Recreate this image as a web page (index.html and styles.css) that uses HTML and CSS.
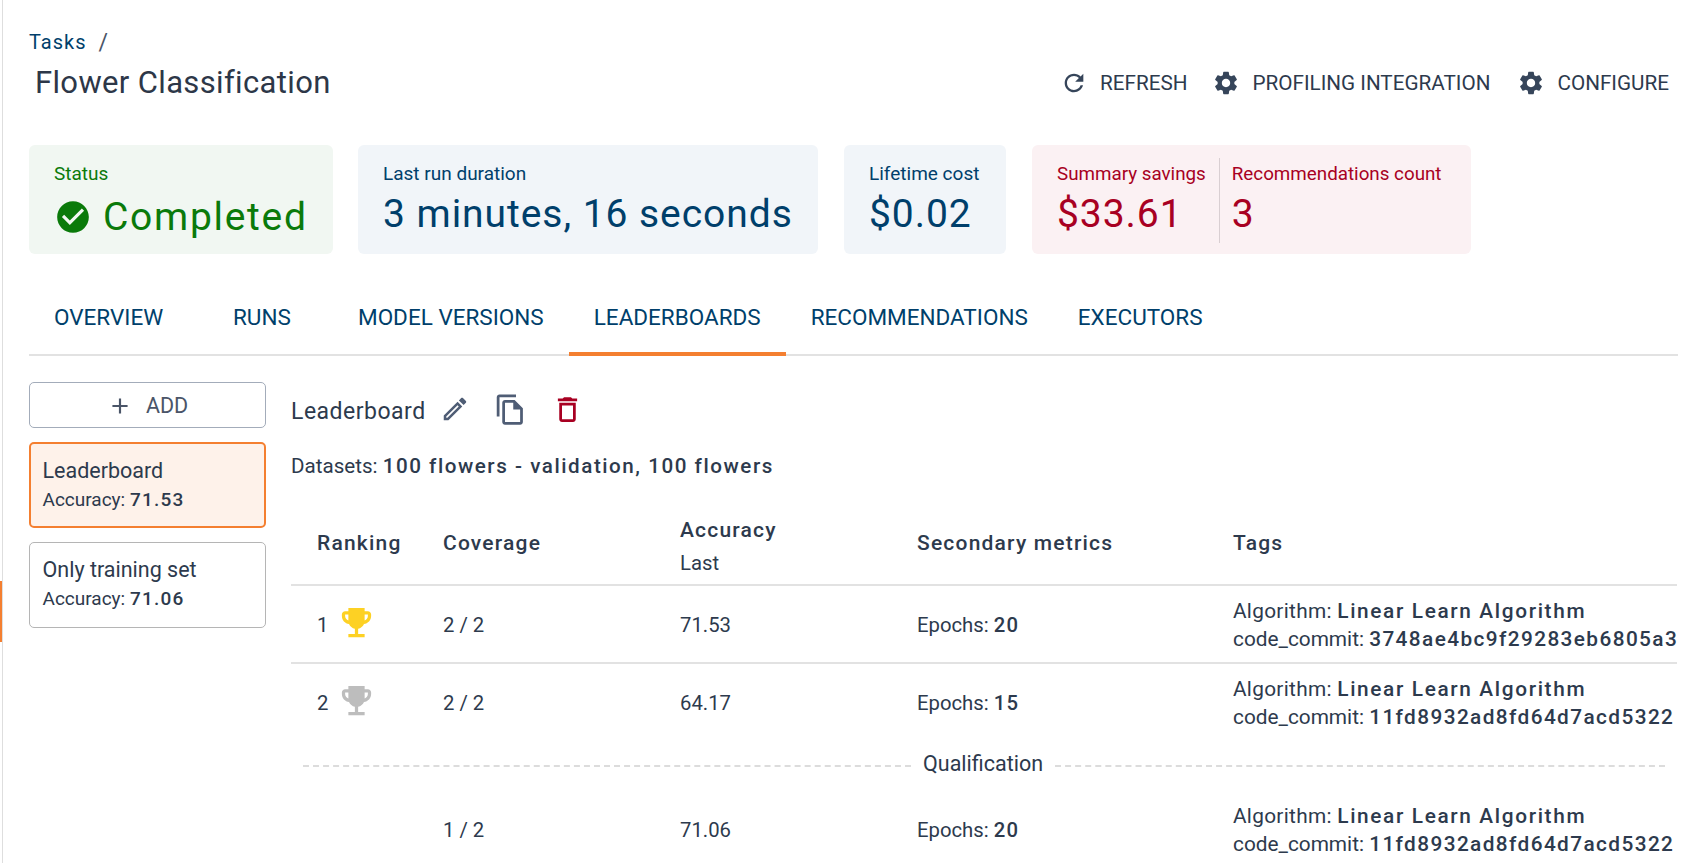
FILE: index.html
```html
<!DOCTYPE html>
<html lang="en">
<head>
    <meta charset="UTF-8">
    <title>Flower Classification - Tasks</title>
    <link rel="stylesheet" href="styles.css">
</head>
<body>
    <svg class="sprite" xmlns="http://www.w3.org/2000/svg">
        <symbol id="i-refresh" viewBox="0 0 24 24"><path d="M17.65 6.35C16.2 4.9 14.21 4 12 4c-4.42 0-7.99 3.58-7.99 8s3.57 8 7.99 8c3.73 0 6.84-2.55 7.73-6h-2.08c-.82 2.33-3.04 4-5.65 4-3.31 0-6-2.69-6-6s2.69-6 6-6c1.66 0 3.14.69 4.22 1.78L13 11h7V4l-2.35 2.35z"/></symbol>
        <symbol id="i-gear" viewBox="0 0 24 24"><path d="M19.14 12.94c.04-.3.06-.61.06-.94 0-.32-.02-.64-.07-.94l2.03-1.58c.18-.14.23-.41.12-.61l-1.92-3.32c-.12-.22-.37-.29-.59-.22l-2.39.96c-.5-.38-1.03-.7-1.62-.94l-.36-2.54c-.04-.24-.24-.41-.48-.41h-3.84c-.24 0-.43.17-.47.41l-.36 2.54c-.59.24-1.13.57-1.62.94l-2.39-.96c-.22-.08-.47 0-.59.22L2.74 8.87c-.12.21-.08.47.12.61l2.03 1.58c-.05.3-.09.63-.09.94s.02.64.07.94l-2.03 1.58c-.18.14-.23.41-.12.61l1.92 3.32c.12.22.37.29.59.22l2.39-.96c.5.38 1.03.7 1.62.94l.36 2.54c.05.24.24.41.48.41h3.84c.24 0 .44-.17.47-.41l.36-2.54c.59-.24 1.13-.56 1.62-.94l2.39.96c.22.08.47 0 .59-.22l1.92-3.32c.12-.22.07-.47-.12-.61l-2.01-1.58zM12 15.6c-1.98 0-3.6-1.62-3.6-3.6s1.62-3.6 3.6-3.6 3.6 1.62 3.6 3.6-1.62 3.6-3.6 3.6z"/></symbol>
        <symbol id="i-trophy" viewBox="0 0 24 24"><path d="M19 5h-2V3H7v2H5c-1.1 0-2 .9-2 2v1c0 2.55 1.92 4.63 4.39 4.94.63 1.5 1.98 2.63 3.61 2.96V19H7v2h10v-2h-4v-3.1c1.63-.33 2.98-1.46 3.61-2.96C19.08 12.63 21 10.55 21 8V7c0-1.1-.9-2-2-2zM5 8V7h2v3.82C5.84 10.4 5 9.3 5 8zm14 0c0 1.3-.84 2.4-2 2.82V7h2v1z"/></symbol>
    </svg>

    <div class="side-marker"></div>

    <main class="page">
        <div class="crumbs"><a class="crumb-link">Tasks</a><span class="crumb-sep">/</span></div>

        <header class="title-row">
            <h1 class="title">Flower Classification</h1>
            <div class="actions">
                <button class="action"><svg class="action-icon"><use href="#i-refresh"/></svg>REFRESH</button>
                <button class="action"><svg class="action-icon"><use href="#i-gear"/></svg>PROFILING INTEGRATION</button>
                <button class="action"><svg class="action-icon"><use href="#i-gear"/></svg>CONFIGURE</button>
            </div>
        </header>

        <section class="stats">
            <div class="stat stat-green">
                <div class="stat-label">Status</div>
                <div class="stat-value status-value">
                    <svg class="status-icon" viewBox="0 0 24 24"><path d="M12 2C6.48 2 2 6.48 2 12s4.48 10 10 10 10-4.48 10-10S17.52 2 12 2zm-2 15l-5-5 1.41-1.41L10 14.17l7.59-7.59L19 8l-9 9z"/></svg>
                    Completed
                </div>
            </div>
            <div class="stat stat-blue">
                <div class="stat-label">Last run duration</div>
                <div class="stat-value">3 minutes, 16 seconds</div>
            </div>
            <div class="stat stat-blue">
                <div class="stat-label">Lifetime cost</div>
                <div class="stat-value">$0.02</div>
            </div>
            <div class="stat stat-red stat-split">
                <div class="split-cell">
                    <div class="stat-label">Summary savings</div>
                    <div class="stat-value">$33.61</div>
                </div>
                <div class="split-cell split-right">
                    <div class="stat-label">Recommendations count</div>
                    <div class="stat-value">3</div>
                </div>
            </div>
        </section>

        <nav class="tabs">
            <a class="tab tab-overview">OVERVIEW</a>
            <a class="tab tab-runs">RUNS</a>
            <a class="tab">MODEL VERSIONS</a>
            <a class="tab tab-active">LEADERBOARDS</a>
            <a class="tab">RECOMMENDATIONS</a>
            <a class="tab">EXECUTORS</a>
        </nav>

        <div class="content">
            <aside class="sidebar">
                <button class="add-btn">
                    <svg class="add-icon" viewBox="0 0 24 24"><path d="M19 13h-6v6h-2v-6H5v-2h6V5h2v6h6v2z"/></svg>
                    ADD
                </button>
                <div class="board-card board-active">
                    <div class="board-name">Leaderboard</div>
                    <div class="board-metric">Accuracy: <b>71.53</b></div>
                </div>
                <div class="board-card">
                    <div class="board-name">Only training set</div>
                    <div class="board-metric">Accuracy: <b>71.06</b></div>
                </div>
            </aside>

            <section class="board">
                <div class="board-head">
                    <span class="board-title">Leaderboard</span>
                    <svg class="tool tool-edit" viewBox="0 0 24 24"><path d="M3 17.25V21h3.75L17.81 9.94l-3.75-3.75L3 17.25zM5.92 19H5v-.92l9.06-9.06.92.92L5.92 19zM20.71 7.04c.39-.39.39-1.02 0-1.41l-2.34-2.34c-.2-.2-.45-.29-.71-.29s-.51.1-.7.29l-1.83 1.83 3.75 3.75 1.83-1.83z"/></svg>
                    <svg class="tool tool-copy" viewBox="0 0 24 24"><path d="M16 1H4c-1.1 0-2 .9-2 2v14h2V3h12V1zm-1 4H8c-1.1 0-1.99.9-1.99 2L6 21c0 1.1.89 2 1.99 2H19c1.1 0 2-.9 2-2V11l-6-6zM8 21V7h6v5h5v9H8z"/></svg>
                    <svg class="tool tool-delete" viewBox="0 0 24 24"><path d="M16 9v10H8V9h8m-1.5-6h-5l-1 1H5v2h14V4h-3.5l-1-1zM18 7H6v12c0 1.1.9 2 2 2h8c1.1 0 2-.9 2-2V7z"/></svg>
                </div>
                <div class="datasets">Datasets: <b>100 flowers - validation, 100 flowers</b></div>

                <table class="rank-table">
                    <colgroup>
                        <col class="col-rank"><col class="col-coverage"><col class="col-accuracy"><col class="col-metrics"><col class="col-tags">
                    </colgroup>
                    <thead>
                        <tr>
                            <th>Ranking</th>
                            <th>Coverage</th>
                            <th class="th-stack">Accuracy<div class="th-sub">Last</div></th>
                            <th>Secondary metrics</th>
                            <th>Tags</th>
                        </tr>
                    </thead>
                    <tbody>
                        <tr class="row-line">
                            <td><div class="rank">1<svg class="trophy trophy-gold"><use href="#i-trophy"/></svg></div></td>
                            <td>2 / 2</td>
                            <td>71.53</td>
                            <td>Epochs: <b>20</b></td>
                            <td>
                                <div class="tag tag-algo">Algorithm: <b>Linear Learn Algorithm</b></div>
                                <div class="tag">code_commit: <b>3748ae4bc9f29283eb6805a3</b></div>
                            </td>
                        </tr>
                        <tr>
                            <td><div class="rank">2<svg class="trophy trophy-silver"><use href="#i-trophy"/></svg></div></td>
                            <td>2 / 2</td>
                            <td>64.17</td>
                            <td>Epochs: <b>15</b></td>
                            <td>
                                <div class="tag tag-algo">Algorithm: <b>Linear Learn Algorithm</b></div>
                                <div class="tag">code_commit: <b>11fd8932ad8fd64d7acd5322</b></div>
                            </td>
                        </tr>
                        <tr class="row-divider">
                            <td colspan="5"><div class="qualification"><span class="qualification-text">Qualification</span></div></td>
                        </tr>
                        <tr>
                            <td></td>
                            <td>1 / 2</td>
                            <td>71.06</td>
                            <td>Epochs: <b>20</b></td>
                            <td>
                                <div class="tag tag-algo">Algorithm: <b>Linear Learn Algorithm</b></div>
                                <div class="tag">code_commit: <b>11fd8932ad8fd64d7acd5322</b></div>
                            </td>
                        </tr>
                    </tbody>
                </table>
            </section>
        </div>
    </main>
</body>
</html>
```

FILE: styles.css
```css
html, body {
    height: 100%;
    overflow: hidden;
}
body {
    margin: 0;
    position: relative;
    background: #fff;
    color: #2d3a4d;
    font-family: 'Roboto', 'Noto Sans', sans-serif;
    font-size: 20.3px;
}
b {
    font-weight: 500;
    letter-spacing: 1.2px;
}
.sprite {
    display: none;
}
.side-marker {
    position: absolute;
    left: 0;
    top: 581px;
    width: 2px;
    height: 61px;
    background: #f47f30;
}
.page {
    height: 100%;
    box-sizing: border-box;
    margin-left: 2px;
    border-left: 1px solid #dedede;
    padding: 28px 22px 0 26px;
}

/* header */
.crumbs {
    display: flex;
    align-items: center;
    height: 28px;
    font-size: 20px;
    letter-spacing: 1px;
}
.crumb-link {
    color: #003f6b;
}
.crumb-sep {
    margin-left: 12px;
    font-size: 23px;
    color: #4a5568;
}
.title-row {
    display: flex;
    align-items: center;
    justify-content: space-between;
    height: 54px;
    padding: 0 9px 0 6px;
}
.title {
    margin: -2px 0 0;
    font-size: 31px;
    font-weight: 400;
    letter-spacing: 0.35px;
    color: #2d3748;
}
.actions {
    display: flex;
    gap: 27px;
}
.action {
    display: flex;
    align-items: center;
    gap: 12px;
    padding: 0;
    border: none;
    background: none;
    font: inherit;
    font-size: 20.7px;
    color: #2d3a4d;
}
.action:first-child {
    margin-right: -2px;
}
.action-icon {
    width: 28px;
    height: 28px;
    fill: #36455a;
}

/* stat cards */
.stats {
    display: flex;
    gap: 25px;
    margin-top: 35px;
}
.stat {
    box-sizing: border-box;
    height: 109px;
    padding: 17px 25px 0;
    border-radius: 6px;
}
.stat:nth-child(1) { width: 304px; }
.stat:nth-child(2) { width: 460px; }
.stat:nth-child(3) { width: 162px; margin-left: 1px; }
.stat:nth-child(4) { width: 439px; margin-left: 1px; }
.stat-green {
    background: #f1f7f2;
    color: #0a7a0a;
}
.stat-blue {
    background: #f1f5f9;
    color: #003f6b;
}
.stat-red {
    background: #fbf1f3;
    color: #a80022;
}
.stat-label {
    font-size: 19px;
    line-height: 24px;
    white-space: nowrap;
}
.stat-value {
    margin-top: 5px;
    font-size: 39px;
    line-height: 46px;
    letter-spacing: 0.95px;
    white-space: nowrap;
}
.status-value {
    display: flex;
    align-items: center;
    gap: 11px;
    margin-top: 8px;
    letter-spacing: 1.7px;
}
.status-icon {
    width: 38px;
    height: 38px;
    fill: #0a7a0a;
}
.stat-split {
    display: flex;
    padding: 13px 0 0 25px;
}
.stat-split .stat-label {
    font-size: 18.8px;
}
.split-cell {
    padding-top: 4px;
}
.split-right {
    height: 85px;
    box-sizing: border-box;
    margin-left: 13px;
    padding-left: 12px;
    border-left: 1px solid #d9cfd2;
}

/* tabs */
.tabs {
    display: flex;
    height: 85px;
    margin-top: 17px;
    box-sizing: border-box;
    border-bottom: 2px solid #e2e2e2;
}
.tab {
    display: flex;
    align-items: center;
    padding: 11px 25px 0;
    font-size: 22.5px;
    color: #003f6b;
    margin-bottom: -2px;
    border-bottom: 4px solid transparent;
    box-sizing: border-box;
}
.tab-overview {
    min-width: 179px;
}
.tab-runs {
    min-width: 125px;
}
.tab-active {
    border-bottom-color: #f47f30;
}

/* main area */
.content {
    display: flex;
    gap: 25px;
    margin-top: 26px;
}
.sidebar {
    display: flex;
    flex-direction: column;
    gap: 14px;
    width: 237px;
    flex-shrink: 0;
}
.add-btn {
    display: flex;
    align-items: center;
    justify-content: center;
    gap: 13px;
    height: 46px;
    padding-top: 2px;
    border: 1.5px solid #a3acba;
    border-radius: 5px;
    background: #fff;
    font: inherit;
    font-size: 21.5px;
    color: #4a5568;
}
.add-icon {
    width: 26px;
    height: 26px;
    fill: #4a5568;
}
.board-card {
    box-sizing: border-box;
    height: 86px;
    padding: 13px 12.5px 0;
    border: 1.5px solid #b5b5b5;
    border-radius: 5px;
}
.board-active {
    background: #fef2ea;
    border: 2px solid #f47f30;
    padding-left: 11.5px;
}
.board-name {
    font-size: 21.5px;
    line-height: 28px;
}
.board-metric {
    margin-top: 1px;
    font-size: 19px;
    line-height: 28px;
}
.board {
    flex: 1;
    min-width: 0;
    overflow: hidden;
}
.board-head {
    display: flex;
    align-items: center;
    height: 58px;
}
.board-title {
    font-size: 23px;
    letter-spacing: 0.5px;
}
.tool {
    width: 30px;
    height: 30px;
    margin-top: -4px;
    fill: #4f5d75;
}
.tool-edit { margin-left: 14px; }
.tool-copy { margin-left: 24px; width: 33px; height: 33px; }
.tool-delete { margin-left: 24px; fill: #a80022; width: 33px; height: 33px; }
.datasets {
    margin-top: 14px;
    font-size: 20.6px;
}
.datasets b {
    letter-spacing: 1.55px;
}

.rank-table {
    width: 1386px;
    margin-top: 24px;
    table-layout: fixed;
    border-collapse: collapse;
}
.col-rank { width: 126px; }
.col-coverage { width: 237px; }
.col-accuracy { width: 237px; }
.col-metrics { width: 316px; }
.col-tags { width: 470px; }
.rank-table th {
    padding: 0 0 0 26px;
    height: 82px;
    text-align: left;
    font-size: 21px;
    font-weight: 500;
    letter-spacing: 1.2px;
    border-bottom: 2px solid #e2e2e2;
}
.rank-table th.th-stack {
    padding-top: 6px;
    height: 76px;
}
.th-sub {
    margin-top: 9px;
    font-size: 20.3px;
    font-weight: 400;
    letter-spacing: 0;
}
.rank-table td {
    padding: 2px 0 0 26px;
    height: 74px;
    white-space: nowrap;
    overflow: hidden;
}
.row-line td {
    border-bottom: 2px solid #e2e2e2;
}
.rank {
    display: flex;
    align-items: center;
    gap: 9px;
}
.trophy {
    width: 39px;
    height: 39px;
    margin-top: -5px;
}
.trophy-gold { fill: #fdd124; }
.trophy-silver { fill: #bdbdbd; }
.tag {
    font-size: 20.8px;
    line-height: 28.5px;
}
.tag b {
    letter-spacing: 1.4px;
}
.tag-algo {
    letter-spacing: 0.3px;
}
.tag-algo b {
    letter-spacing: 1.65px;
}
.rank-table .row-divider td {
    height: 51px;
    padding: 0 12px;
}
.qualification {
    display: flex;
    align-items: center;
    gap: 12px;
}
.qualification-text {
    font-size: 21.5px;
    margin-top: -4px;
}
.qualification::before,
.qualification::after {
    content: "";
    height: 0;
    border-top: 2px dashed #dcdcdc;
}
.qualification::before {
    flex: 0 0 608px;
}
.qualification::after {
    flex: 1;
}
```
